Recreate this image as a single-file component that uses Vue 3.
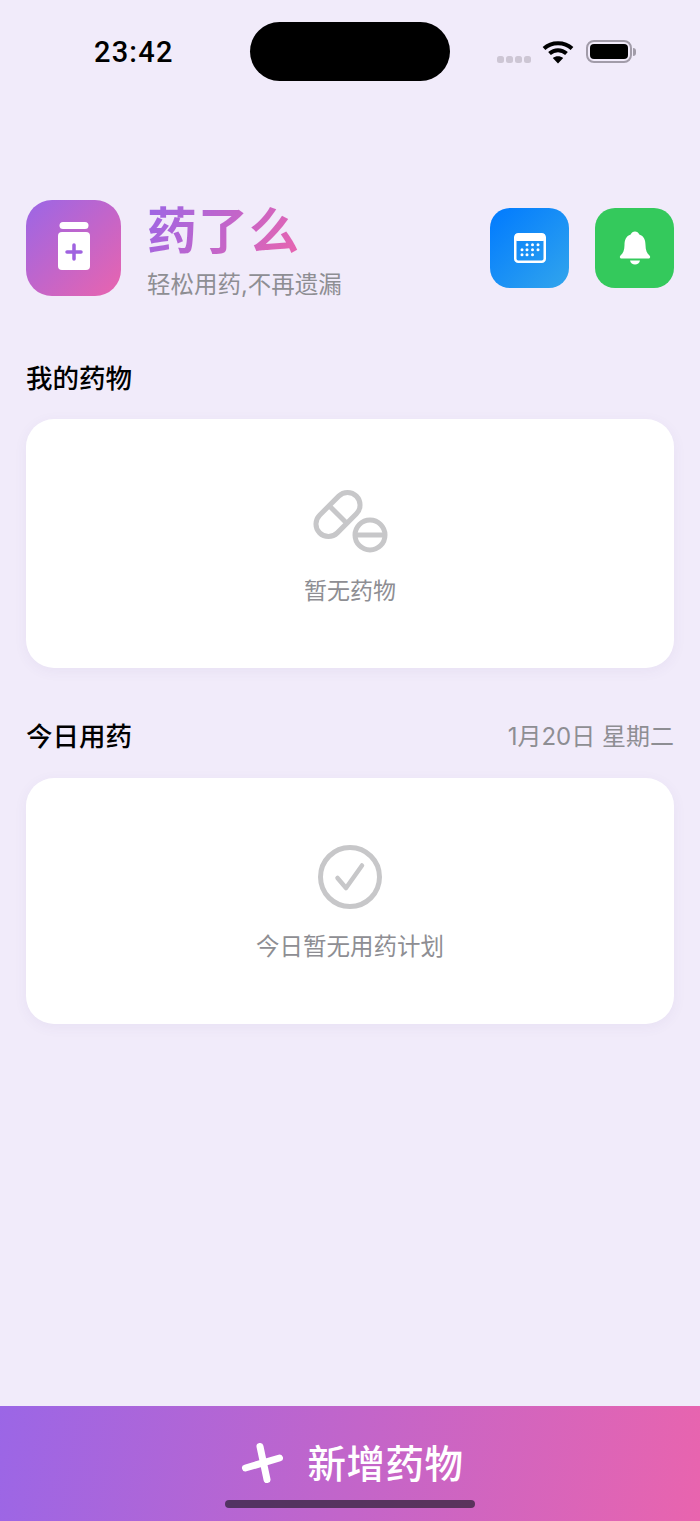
<template>
  <div class="page">
    <div class="status-bar">
      <span class="clock">23:42</span>
      <div class="island"></div>
      <div class="status-icons">
        <div class="signal"><i></i><i></i><i></i><i></i></div>
        <svg class="wifi" width="32" height="24" viewBox="0 0 32 24">
          <path d="M2 8.500C9.500 1.500 22.500 1.500 30 8.500" fill="none" stroke="#000" stroke-width="4" />
          <path d="M7.500 13.500C12.500 9 19.500 9 24.500 13.500" fill="none" stroke="#000" stroke-width="4" />
          <path d="M16 23.500L10.800 18C13.800 15.500 18.200 15.500 21.200 18Z" fill="#000" />
        </svg>
        <div class="battery"><div class="battery-fill"></div></div>
        <div class="battery-cap"></div>
      </div>
    </div>

    <header class="head">
      <div class="logo">
        <svg width="36" height="50" viewBox="0 0 36 50">
          <rect x="3.500" y="0" width="29" height="7" rx="3.500" fill="#fff" />
          <rect x="2" y="10" width="32" height="38" rx="4" fill="#fff" />
          <path d="M18 23V37M11 30H25" stroke="#9f62e0" stroke-width="3.500" stroke-linecap="round" />
        </svg>
      </div>
      <div class="brand">
        <h1 class="brand-name">药了么</h1>
        <p class="brand-sub">轻松用药,不再遗漏</p>
      </div>
      <div class="head-btns">
        <div class="head-btn calendar">
          <svg width="32" height="30" viewBox="0 0 32 30">
            <rect x="1.250" y="1.250" width="29.500" height="27.500" rx="3" fill="none" stroke="#fff" stroke-width="2.500" />
            <rect x="1" y="1" width="30" height="7" rx="2" fill="#fff" />
            <g fill="#fff">
              <circle v-for="d in calendarDots" :key="d[0] + '-' + d[1]" :cx="d[0]" :cy="d[1]" r="1.500" />
            </g>
          </svg>
        </div>
        <div class="head-btn bell">
          <svg width="32" height="34" viewBox="0 0 32 34">
            <path d="M16 0.500C18 0.500 19.500 1.600 20.300 3.500C25 5 26.500 9 26.500 14C26.500 19 28 22.500 30.500 24.500C31.800 25.800 31 27.500 29.500 27.500H2.500C1 27.500 0.200 25.800 1.500 24.500C4 22.500 5.500 19 5.500 14C5.500 9 7 5 11.700 3.500C12.500 1.600 14 0.500 16 0.500Z" fill="#fff" />
            <path d="M11 29.500H21C20.500 32 18.500 33.500 16 33.500C13.500 33.500 11.500 32 11 29.500Z" fill="#fff" />
          </svg>
        </div>
      </div>
    </header>

    <section class="section first">
      <div class="section-head">
        <h2>我的药物</h2>
      </div>
      <div class="card card-meds">
        <svg class="empty-icon" width="76" height="66" viewBox="0 0 76 66">
          <g fill="none" stroke="#c7c7c9" stroke-width="5">
            <rect x="0" y="14" width="52" height="25" rx="12.500" transform="rotate(-45 26 26.500)" />
            <path d="M17.500 18L34.500 35" />
            <circle cx="58" cy="47" r="15" />
            <path d="M43 47H73" />
          </g>
        </svg>
        <p class="empty-text meds-text">暂无药物</p>
      </div>
    </section>

    <section class="section second">
      <div class="section-head">
        <h2>今日用药</h2>
        <span class="date">1月20日 星期二</span>
      </div>
      <div class="card card-today">
        <svg class="empty-icon" width="64" height="64" viewBox="0 0 64 64">
          <circle cx="32" cy="32" r="29.500" fill="none" stroke="#c7c7c9" stroke-width="5" />
          <path d="M19.500 33L28 43L44 20.500" fill="none" stroke="#c7c7c9" stroke-width="4.500" stroke-linecap="round" stroke-linejoin="round" />
        </svg>
        <p class="empty-text today-text">今日暂无用药计划</p>
      </div>
    </section>

    <div class="spacer"></div>

    <div class="add-bar">
      <svg class="add-icon" width="44" height="44" viewBox="0 0 44 44">
        <path d="M20 4.500L27 37.500M5.500 26L39.500 16" stroke="#fff" stroke-width="7" stroke-linecap="round" />
      </svg>
      <span class="add-text">新增药物</span>
      <div class="home-bar"></div>
    </div>
  </div>
</template>

<script setup>
const calendarDots = [
  [13, 11.7], [18.5, 11.7], [24, 11.7],
  [8, 16.7], [13, 16.7], [18.5, 16.7], [24, 16.7],
  [8, 21.7], [13, 21.7], [18.5, 21.7],
]
</script>

<style>
html, body {
  margin: 0;
  background: #f1ebfa;
}
</style>

<style scoped>
.page {
  width: 700px;
  height: 1521px;
  display: flex;
  flex-direction: column;
  overflow: hidden;
  background: #f1ebfa;
  font-family: "Inter", "Noto Sans CJK SC", sans-serif;
}
.status-bar {
  height: 81px;
  padding-top: 22px;
  box-sizing: border-box;
  position: relative;
  display: flex;
  flex-shrink: 0;
}
.clock {
  position: absolute;
  left: 94px;
  top: 34px;
  font-family: "Roboto", sans-serif;
  font-size: 29px;
  line-height: 36px;
  font-weight: 500;
  letter-spacing: 1.200px;
  color: #000;
}
.island {
  width: 200px;
  height: 59px;
  margin: 0 auto;
  border-radius: 30px;
  background: #000;
}
.status-icons {
  position: absolute;
  left: 497px;
  top: 39px;
  display: flex;
  align-items: center;
}
.signal {
  display: flex;
  gap: 2.500px;
  margin-top: 16px;
  margin-right: 11px;
}
.signal i {
  width: 6.500px;
  height: 7px;
  border-radius: 2.500px;
  background: #cdc6d4;
}
.wifi {
  margin-right: 12px;
  margin-top: 1px;
}
.battery {
  width: 46px;
  height: 23px;
  box-sizing: border-box;
  border: 2px solid #a29ca9;
  border-radius: 8px;
  padding: 2px;
}
.battery-fill {
  height: 100%;
  border-radius: 4px;
  background: #000;
}
.battery-cap {
  width: 3px;
  height: 8px;
  margin-left: 1px;
  border-radius: 0 3px 3px 0;
  background: #a29ca9;
}
.head {
  margin-top: 119px;
  padding: 0 26px;
  height: 96px;
  display: flex;
  align-items: center;
}
.logo {
  width: 95px;
  height: 96px;
  border-radius: 26px;
  background: linear-gradient(135deg, #9b66e6, #e964ae);
  display: flex;
  align-items: center;
  justify-content: center;
}
.logo svg {
  margin-top: -2px;
}
.brand {
  margin-left: 26px;
  padding-top: 6px;
  flex: 1;
}
.brand-name {
  margin: 0;
  width: 152px;
  font-size: 50px;
  line-height: 62px;
  font-weight: 700;
  letter-spacing: 1px;
  white-space: nowrap;
  background: linear-gradient(120deg, #9b66e6, #e964ae);
  -webkit-background-clip: text;
  background-clip: text;
  color: transparent;
}
.brand-sub {
  margin: 5px 0 0;
  font-size: 23.500px;
  line-height: 36px;
  color: #8e8e93;
  white-space: nowrap;
}
.head-btns {
  display: flex;
  gap: 26px;
}
.head-btn {
  width: 79px;
  height: 80px;
  border-radius: 20px;
  display: flex;
  align-items: center;
  justify-content: center;
}
.calendar {
  background: linear-gradient(135deg, #007aff, #32a5ec);
}
.bell {
  background: #34c95c;
}
.section {
  padding: 0 26px;
}
.first {
  margin-top: 58px;
}
.second {
  margin-top: 44px;
}
.section-head {
  height: 44px;
  display: flex;
  align-items: center;
  justify-content: space-between;
}
.section-head h2 {
  margin: 0;
  font-size: 26.500px;
  font-weight: 500;
  color: #000;
}
.date {
  font-size: 24px;
  color: #8e8e93;
}
.card {
  margin-top: 21px;
  background: #fff;
  border-radius: 28px;
  box-shadow: 0 3px 14px rgba(90, 60, 130, 0.06);
  display: flex;
  flex-direction: column;
  align-items: center;
  box-sizing: border-box;
}
.card-meds {
  height: 249px;
  padding-top: 69px;
}
.card-today {
  margin-top: 22px;
  height: 246px;
  padding-top: 67px;
}
.empty-icon {
  display: block;
}
.empty-text {
  margin: 0;
  color: #8e8e93;
  line-height: 34px;
  white-space: nowrap;
}
.meds-text {
  margin-top: 20px;
  font-size: 23px;
}
.today-text {
  margin-top: 21px;
  font-size: 23.500px;
}
.spacer {
  flex: 1;
}
.add-bar {
  position: relative;
  height: 115px;
  flex-shrink: 0;
  background: linear-gradient(100deg, #9b66e6, #e964ae);
  display: flex;
  justify-content: center;
  padding-top: 35px;
  padding-left: 4px;
  box-sizing: border-box;
}
.add-icon {
  margin-top: 1px;
  margin-right: 23px;
}
.add-text {
  font-size: 38.500px;
  line-height: 46px;
  font-weight: 500;
  letter-spacing: 0.500px;
  color: #fff;
  white-space: nowrap;
}
.home-bar {
  position: absolute;
  left: 225px;
  bottom: 13px;
  width: 250px;
  height: 8px;
  border-radius: 4px;
  background: rgba(40, 30, 50, 0.7);
}
</style>
